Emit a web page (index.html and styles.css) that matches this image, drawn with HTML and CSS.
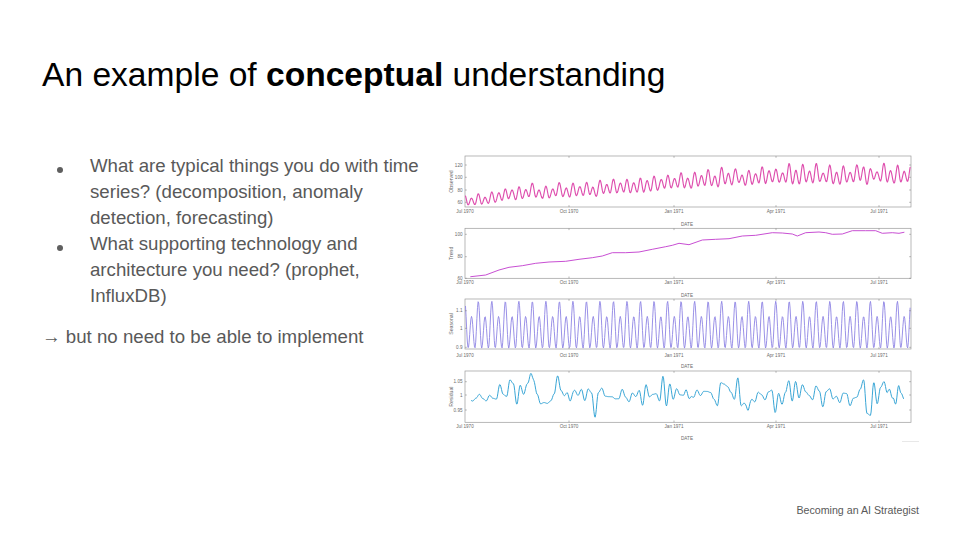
FILE: index.html
```html
<!DOCTYPE html>
<html lang="en">
<head>
<meta charset="utf-8">
<title>An example of conceptual understanding</title>
<link rel="stylesheet" href="styles.css">
</head>
<body>
<div class="slide">
  <h1 class="title">An example of <b>conceptual</b> understanding</h1>
  <div class="content">
    <div class="text">
      <ul class="bullets">
        <li>What are typical things you do with time series? (decomposition, anomaly detection, forecasting)</li>
        <li>What supporting technology and architecture you need? (prophet, InfluxDB)</li>
      </ul>
      <p class="note">→ but no need to be able to implement</p>
    </div>
    <div class="figure">
      <svg id="decomp" class="chart" width="475" height="295" viewBox="445 150 475 295" xmlns="http://www.w3.org/2000/svg"></svg>
    </div>
  </div>
  <div class="footer">Becoming an AI Strategist</div>
</div>
<script src="script.js"></script>
</body>
</html>
```

FILE: styles.css
```css
html, body {
  margin: 0;
  padding: 0;
  background: #ffffff;
}

.slide {
  width: 960px;
  height: 540px;
  box-sizing: border-box;
  padding: 55px 41px 23px 42px;
  display: flex;
  flex-direction: column;
  background: #ffffff;
  font-family: "Liberation Sans", Arial, sans-serif;
  overflow: hidden;
}

.title {
  margin: 0;
  font-size: 33.6px;
  line-height: 40px;
  font-weight: normal;
  color: #000000;
  white-space: nowrap;
}

.title b {
  font-weight: bold;
}

.content {
  display: flex;
  align-items: flex-start;
  margin-top: 55px;
}

.text {
  width: 390px;
  margin-right: 13px;
  padding-top: 3px;
  color: #595959;
  font-size: 18.67px;
  line-height: 26px;
}

.bullets {
  list-style: none;
  margin: 0;
  padding: 0;
}

.bullets li {
  display: flex;
  align-items: flex-start;
}

.bullets li::before {
  content: "";
  flex: 0 0 6.4px;
  width: 6.4px;
  height: 6.4px;
  margin: 14px 26.6px 0 15px;
  border-radius: 50%;
  background: #5f5f5f;
}

.note {
  margin: 15px 0 0;
}

.figure {
  flex: 0 0 auto;
  line-height: 0;
}

.chart {
  display: block;
}

.chart .axis-text {
  font-family: "Liberation Sans", Arial, sans-serif;
  fill: #6a6a6a;
}

.footer {
  margin-top: auto;
  align-self: flex-end;
  font-size: 10.67px;
  line-height: 14px;
  color: #595959;
  white-space: nowrap;
}
```

FILE: script.js
```js
(function () {
  var NS = 'http://www.w3.org/2000/svg';
  var svg = document.getElementById('decomp');
  if (!svg) return;

  function el(name, attrs, text) {
    var e = document.createElementNS(NS, name);
    for (var k in attrs) e.setAttribute(k, attrs[k]);
    if (text) e.textContent = text;
    svg.appendChild(e);
    return e;
  }

  var L = 466, R = 912;
  var seed = 11;
  function rnd() { seed = (seed * 16807) % 2147483647; return seed / 2147483647; }

  var T = [[466,277.8],[471.7,276.7],[486.7,275],[500,270],[510,267.3],[523.3,265.7],[536.7,263.3],[550,262],[566.7,261.3],[580,259.3],[593.3,257.7],[603.3,256],[613.3,252.7],[626.7,252.7],[640,252],[653.3,249.3],[666.7,246.7],[673.3,245.3],[680,243.3],[690,244.7],[703.3,240],[716.7,239.3],[730,238.7],[743.3,236],[756.7,235.3],[773.3,232.7],[783.3,233],[793.3,234],[798.3,236],[806.7,232.7],[820,232],[826.7,232.7],[833.3,234.3],[843.3,234],[853.3,230.7],[866.7,230.7],[876.7,230.7],[883.3,233.3],[893.3,232.7],[900,233.3],[905,232.3],[912,232]];

  function lin(pts, x) {
    if (x <= pts[0][0]) return pts[0][1];
    for (var i = 1; i < pts.length; i++) {
      if (x <= pts[i][0]) {
        var a = pts[i - 1], b = pts[i];
        var t = (x - a[0]) / (b[0] - a[0]);
        return a[1] + (b[1] - a[1]) * t;
      }
    }
    return pts[pts.length - 1][1];
  }
  function trendV(x) { return 60 + (278.3 - lin(T, x)) / 1.1 + 2; }

  var P = 13.52, PX0 = 479.3;
  var SK = [[0,1.15],[0.25,0.89],[0.5,1.066],[0.75,0.89],[1,1.15]];
  function seas(x) {
    var ph = ((x - PX0) / P) % 1;
    if (ph < 0) ph += 1;
    for (var i = 1; i < SK.length; i++) {
      if (ph <= SK[i][0]) {
        var a = SK[i - 1], b = SK[i];
        var t = (ph - a[0]) / (b[0] - a[0]);
        return a[1] + (b[1] - a[1]) * (1 - Math.cos(Math.PI * t)) / 2;
      }
    }
    return SK[0][1];
  }

  var RK = [];
  for (var kx = 460; kx <= 920; kx += 3.4) {
    RK.push([kx, (rnd() + rnd() + rnd() - 1.5) * 0.055]);
  }
  var SP = [[531.7, 0.06, 2], [749, -0.06, 2], [897.5, -0.065, 1.8], [891, 0.04, 1.8], [689, -0.025, 2], [571, -0.03, 2]];
  function resid(x) {
    var r = 0;
    for (var i = 1; i < RK.length; i++) {
      if (x <= RK[i][0]) {
        var a = RK[i - 1], b = RK[i];
        var t = (x - a[0]) / (b[0] - a[0]);
        r = a[1] + (b[1] - a[1]) * (1 - Math.cos(Math.PI * t)) / 2;
        break;
      }
    }
    for (var j = 0; j < SP.length; j++) {
      var d = (x - SP[j][0]) / SP[j][2];
      r += SP[j][1] * Math.exp(-d * d);
    }
    return r;
  }

  var panels = [
    { top: 156, bottom: 207, name: 'Observed', ticks: [['120',165],['100',177.3],['80',190],['60',202.3]], xlab: 211.7, date: 224 },
    { top: 228.3, bottom: 278.3, name: 'Trend', ticks: [['100',234.3],['80',256.7],['60',278.3]], xlab: 282.7, date: 295.7 },
    { top: 299, bottom: 349, name: 'Seasonal', ticks: [['1.1',310.7],['1',328.3],['0.9',347.3]], xlab: 355, date: 366.5 },
    { top: 371, bottom: 422.3, name: 'Residual', ticks: [['1.05',381.7],['1',395],['0.95',410]], xlab: 426.5, date: 438.3 }
  ];
  var XT = [['Jul 1970',466],['Oct 1970',570],['Jan 1971',675],['Apr 1971',777],['Jul 1971',880]];

  panels.forEach(function (p) {
    el('rect', { x: L, y: p.top, width: R - L, height: p.bottom - p.top, fill: '#ffffff', stroke: '#9a9a9a', 'stroke-width': 0.7 });
  });

  function poly(pts, color, w) {
    el('polyline', { points: pts.map(function (q) { return q[0].toFixed(2) + ',' + q[1].toFixed(2); }).join(' '), fill: 'none', stroke: color, 'stroke-width': w, 'stroke-linejoin': 'round', 'stroke-linecap': 'round' });
  }

  var obs = [], sea = [], res = [], tr = [];
  for (var x = L + 0.5; x <= R - 0.3; x += 0.6) {
    var r = (x >= 472 && x <= 905) ? resid(x) : resid(x) * 0.5;
    var v = trendV(x) * seas(x) * (1 + r * 0.8);
    var y = 202.3 - (v - 60) * 0.6225;
    obs.push([x, Math.max(157, Math.min(206.3, y))]);
    sea.push([x, 328.3 - (seas(x) - 1) * 180]);
    if (x >= 472 && x <= 905) res.push([x, Math.max(372, Math.min(421.5, 395 - resid(x) * 280))]);
  }
  T.forEach(function (q) { if (q[0] >= 471 && q[0] <= 906) tr.push(q); });

  poly(obs, '#de4fae', 1.15);
  poly(tr, '#c84fd3', 1);
  poly(sea, '#8e84e4', 0.9);
  poly(res, '#39a6d6', 1);

  panels.forEach(function (p) {
    XT.forEach(function (t) {
      if (t[1] > L && t[1] < R) {
        el('line', { x1: t[1], y1: p.top, x2: t[1], y2: p.top + 1.8, stroke: '#888', 'stroke-width': 0.6 });
        el('line', { x1: t[1], y1: p.bottom, x2: t[1], y2: p.bottom - 1.8, stroke: '#888', 'stroke-width': 0.6 });
      }
      el('text', { x: t[1], y: p.xlab + 1.7, 'font-size': 4.6, 'text-anchor': 'middle', 'class': 'axis-text' }, t[0]);
    });
    p.ticks.forEach(function (t) {
      el('line', { x1: L, y1: t[1], x2: L + 1.8, y2: t[1], stroke: '#888', 'stroke-width': 0.6 });
      el('line', { x1: R, y1: t[1], x2: R - 1.8, y2: t[1], stroke: '#888', 'stroke-width': 0.6 });
      el('text', { x: 463.5, y: t[1] + 1.7, 'font-size': 4.6, 'text-anchor': 'end', 'class': 'axis-text' }, t[0]);
    });
    el('text', { x: 688, y: p.date + 1.7, 'font-size': 4.6, 'text-anchor': 'middle', 'class': 'axis-text' }, 'DATE');
    var cy = (p.top + p.bottom) / 2;
    el('text', { x: 0, y: 0, 'font-size': 5.2, 'text-anchor': 'middle', 'class': 'axis-text', transform: 'translate(454,' + cy + ') rotate(-90)' }, p.name);
  });

  el('line', { x1: 903, y1: 441.5, x2: 920, y2: 441.5, stroke: '#e2e2e2', 'stroke-width': 0.8 });
})();
```
